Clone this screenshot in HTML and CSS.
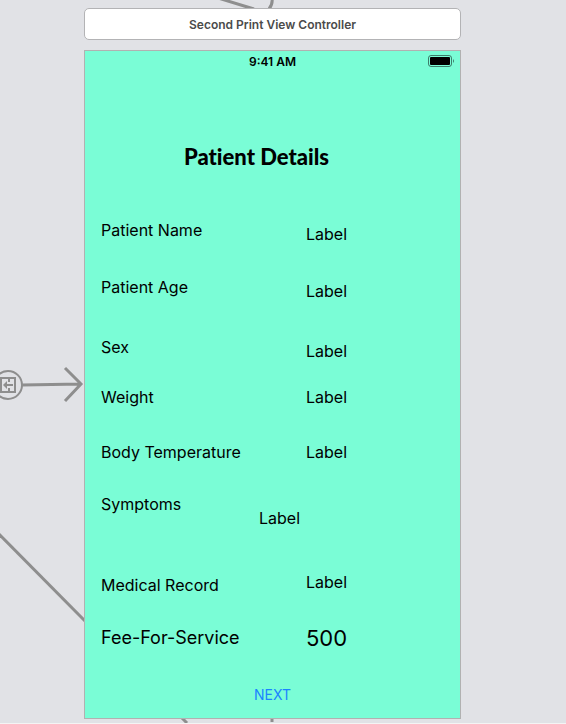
FILE: index.html
```html
<!DOCTYPE html>
<html lang="en">
<head>
<meta charset="utf-8">
<meta name="viewport" content="width=device-width, initial-scale=1">
<title>Second Print View Controller</title>
<link rel="stylesheet" href="styles.css">
</head>
<body>
<div class="canvas">
  <svg class="connectors" width="566" height="723" viewBox="0 0 566 723" fill="none" stroke="#8e8e8e" stroke-width="3" aria-hidden="true">
    <path d="M218 -2 L254 9 M272 -2 Q273 4 269 9"/>
    <circle cx="8" cy="385" r="14" stroke-width="2"/>
    <path stroke-width="2" d="M1 378 H15 V392 H1 Z M9 378 V382 M9 388 V392 M13 385 H5"/>
    <path stroke="none" fill="#8e8e8e" d="M3 385 L7 381 V389 Z"/>
    <path d="M22 385 L81 384 M65 368 L81 384 L65 401"/>
    <path d="M-2 533 L86 622"/>
    <path d="M180 716 L187 723 M272 716 V722"/>
  </svg>
  <header class="scene-title">Second Print View Controller</header>
  <main class="screen">
    <div class="status-bar">
      <span class="time">9:41 AM</span>
      <svg class="battery" width="27" height="12" viewBox="0 0 27 12" role="img" aria-label="Battery full">
        <rect x="0.5" y="0.5" width="23" height="11" rx="2.5" fill="none" stroke="#000" stroke-opacity="0.5"/>
        <rect x="2" y="2" width="20" height="8" rx="1" fill="#000"/>
        <path d="M25 4 Q27 6 25 8 Z" fill="#000" fill-opacity="0.5"/>
      </svg>
    </div>
    <h1>Patient Details</h1>
    <dl class="details">
      <div class="row stagger"><dt>Patient Name</dt><dd>Label</dd></div>
      <div class="row stagger"><dt>Patient Age</dt><dd>Label</dd></div>
      <div class="row stagger"><dt>Sex</dt><dd>Label</dd></div>
      <div class="row"><dt>Weight</dt><dd>Label</dd></div>
      <div class="row"><dt>Body Temperature</dt><dd>Label</dd></div>
      <div class="row symptoms"><dt>Symptoms</dt><dd>Label</dd></div>
      <div class="row record"><dt>Medical Record</dt><dd>Label</dd></div>
      <div class="row fee"><dt>Fee-For-Service</dt><dd>500</dd></div>
    </dl>
    <button class="next" type="button">NEXT</button>
  </main>
</div>
</body>
</html>
```
FILE: styles.css
```css
* {
  box-sizing: border-box;
}

body {
  margin: 0;
  background: #e1e2e6;
  color: #000;
  font-family: Inter, "Liberation Sans", sans-serif;
}

.canvas {
  position: relative;
  min-height: 100vh;
  padding: 8px 105px 4px 84px;
  border-bottom: 1px solid #f4f4f4;
  overflow: hidden;
}

.connectors {
  position: absolute;
  top: 0;
  left: 0;
}

.scene-title {
  position: relative;
  height: 32px;
  border: 1px solid #b3b3b5;
  border-radius: 5px;
  background: #fff;
  color: #4b4b4b;
  font-size: 12px;
  font-weight: 600;
  line-height: 31px;
  text-align: center;
}

.screen {
  position: relative;
  display: flex;
  flex-direction: column;
  margin-top: 10px;
  padding-bottom: 11px;
  border: 1px solid #b1b1b1;
  background: #7afdd6;
}

.status-bar {
  display: grid;
  grid-template-columns: 1fr auto 1fr;
  align-items: center;
  height: 20px;
  padding: 0 5px;
}

.time {
  grid-column: 2;
  font-size: 12px;
  font-weight: 600;
}

.battery {
  justify-self: end;
}

h1 {
  margin: 70px 32px 0 0;
  font-family: Lato, sans-serif;
  font-size: 22px;
  font-variant-ligatures: none;
  font-weight: 900;
  line-height: 32px;
  text-align: center;
}

.details {
  display: grid;
  grid-template-rows: 57px 60px 50px 55px 52px 78px 56px 24px;
  margin: 45px 0 0;
  padding: 0 16px;
  font-size: 16px;
  line-height: 24px;
}

.row {
  display: grid;
  grid-template-columns: 205px 1fr;
  align-self: start;
}

dd {
  margin: 0;
}

.stagger {
  height: 28px;
}

.stagger dd,
.symptoms dd,
.record dt {
  align-self: end;
}

.symptoms {
  grid-template-columns: 158px 1fr;
  height: 38px;
}

.record {
  height: 27px;
}

.fee {
  font-size: 18px;
}

.fee dd {
  font-size: 22px;
}

.next {
  align-self: center;
  margin: 33px 0 0;
  padding: 0;
  border: 0;
  background: none;
  color: #1a83ff;
  font-family: inherit;
  font-size: 14px;
  line-height: 24px;
}
```
